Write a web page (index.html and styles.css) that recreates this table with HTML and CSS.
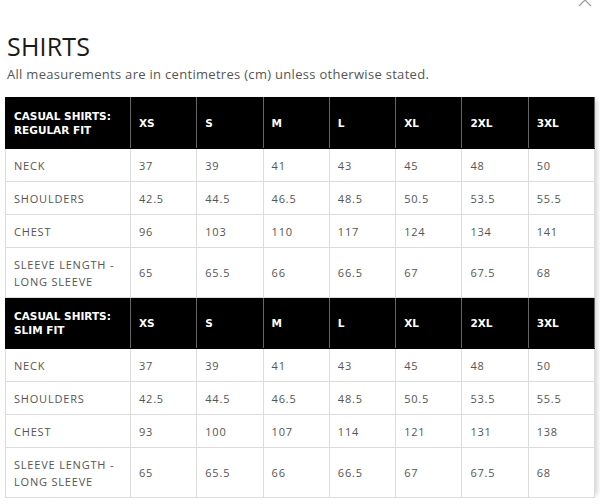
FILE: index.html
```html
<!DOCTYPE html>
<html>
<head>
<meta charset="utf-8">
<link rel="stylesheet" href="styles.css">
</head>
<body>
<div class="modal">
  <svg class="close" width="14" height="14" viewBox="0 0 14 14"><path d="M1 1 L13 13 M13 1 L1 13" stroke="#9a9a9a" stroke-width="1.2" fill="none"/></svg>
  <h1 class="title">SHIRTS</h1>
  <p class="note">All measurements are in centimetres (cm) unless otherwise stated.</p>
  <table class="sizes">
    <colgroup><col class="c-label"><col><col><col><col><col><col><col></colgroup>
    <tbody>
      <tr class="head"><th>CASUAL SHIRTS:<br>REGULAR FIT</th><th>XS</th><th>S</th><th>M</th><th>L</th><th>XL</th><th>2XL</th><th>3XL</th></tr>
      <tr><td>NECK</td><td>37</td><td>39</td><td>41</td><td>43</td><td>45</td><td>48</td><td>50</td></tr>
      <tr><td>SHOULDERS</td><td>42.5</td><td>44.5</td><td>46.5</td><td>48.5</td><td>50.5</td><td>53.5</td><td>55.5</td></tr>
      <tr><td>CHEST</td><td>96</td><td>103</td><td>110</td><td>117</td><td>124</td><td>134</td><td>141</td></tr>
      <tr class="tall"><td>SLEEVE LENGTH -<br>LONG SLEEVE</td><td>65</td><td>65.5</td><td>66</td><td>66.5</td><td>67</td><td>67.5</td><td>68</td></tr>
      <tr class="head"><th>CASUAL SHIRTS:<br>SLIM FIT</th><th>XS</th><th>S</th><th>M</th><th>L</th><th>XL</th><th>2XL</th><th>3XL</th></tr>
      <tr><td>NECK</td><td>37</td><td>39</td><td>41</td><td>43</td><td>45</td><td>48</td><td>50</td></tr>
      <tr><td>SHOULDERS</td><td>42.5</td><td>44.5</td><td>46.5</td><td>48.5</td><td>50.5</td><td>53.5</td><td>55.5</td></tr>
      <tr><td>CHEST</td><td>93</td><td>100</td><td>107</td><td>114</td><td>121</td><td>131</td><td>138</td></tr>
      <tr class="tall"><td>SLEEVE LENGTH -<br>LONG SLEEVE</td><td>65</td><td>65.5</td><td>66</td><td>66.5</td><td>67</td><td>67.5</td><td>68</td></tr>
    </tbody>
  </table>
</div>
</body>
</html>
```
FILE: styles.css
```css
html, body {
  margin: 0;
  padding: 0;
  background: #fff;
}
.modal {
  position: relative;
  padding: 0 0 0 5px;
  font-family: "Open Sans", "DejaVu Sans", sans-serif;
  color: #444;
}
.close {
  position: absolute;
  top: -7px;
  right: 8px;
}
.title {
  margin: 0;
  padding: 32px 0 0 2px;
  font-size: 25px;
  line-height: 28px;
  font-weight: 500;
  color: #1a1a1a;
  letter-spacing: 0.2px;
}
.note {
  margin: 6px 0 0 2px;
  font-size: 13px;
  line-height: 16px;
  color: #555;
  letter-spacing: 0.3px;
}
.sizes {
  margin-top: 15px;
  border-collapse: collapse;
  table-layout: fixed;
  width: 590px;
  box-shadow: 5px 0 5px -3px rgba(0,0,0,0.18);
}
.c-label { width: 125px; }
.sizes th, .sizes td {
  text-align: left;
  padding: 0 8px;
  vertical-align: middle;
}
.sizes td {
  border: 1px solid #dcdcdc;
  height: 32px;
  font-size: 11px;
  line-height: 17px;
  color: #555;
  letter-spacing: 0.8px;
}
.sizes tr.tall td { height: 49px; }
.sizes tr.head th {
  background: #000;
  color: #fff;
  height: 50px;
  border: 1px solid #666;
  border-top-color: #000;
  border-bottom-color: #000;
  font-family: "DejaVu Sans", sans-serif;
  font-weight: 700;
  font-size: 10.5px;
  line-height: 14px;
}
.sizes tr.head th:first-child { border-left-color: #000; }
```
